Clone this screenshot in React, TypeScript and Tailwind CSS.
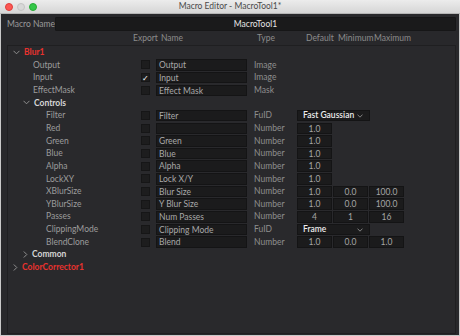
import React from 'react'

type Row = {
  label: string
  depth: number
  kind: 'group' | 'param'
  open?: boolean
  red?: boolean
  checked?: boolean
  name?: string
  type?: string
  def?: string
  min?: string
  max?: string
  combo?: string
}

const rows: Row[] = [
  { label: 'Blur1', depth: 0, kind: 'group', open: true, red: true },
  { label: 'Output', depth: 1, kind: 'param', name: 'Output', type: 'Image' },
  { label: 'Input', depth: 1, kind: 'param', name: 'Input', type: 'Image', checked: true },
  { label: 'EffectMask', depth: 1, kind: 'param', name: 'Effect Mask', type: 'Mask' },
  { label: 'Controls', depth: 1, kind: 'group', open: true },
  { label: 'Filter', depth: 2, kind: 'param', name: 'Filter', type: 'FuID', combo: 'Fast Gaussian' },
  { label: 'Red', depth: 2, kind: 'param', name: '', type: 'Number', def: '1.0' },
  { label: 'Green', depth: 2, kind: 'param', name: 'Green', type: 'Number', def: '1.0' },
  { label: 'Blue', depth: 2, kind: 'param', name: 'Blue', type: 'Number', def: '1.0' },
  { label: 'Alpha', depth: 2, kind: 'param', name: 'Alpha', type: 'Number', def: '1.0' },
  { label: 'LockXY', depth: 2, kind: 'param', name: 'Lock X/Y', type: 'Number', def: '1.0' },
  { label: 'XBlurSize', depth: 2, kind: 'param', name: 'Blur Size', type: 'Number', def: '1.0', min: '0.0', max: '100.0' },
  { label: 'YBlurSize', depth: 2, kind: 'param', name: 'Y Blur Size', type: 'Number', def: '1.0', min: '0.0', max: '100.0' },
  { label: 'Passes', depth: 2, kind: 'param', name: 'Num Passes', type: 'Number', def: '4', min: '1', max: '16' },
  { label: 'ClippingMode', depth: 2, kind: 'param', name: 'Clipping Mode', type: 'FuID', combo: 'Frame' },
  { label: 'BlendClone', depth: 2, kind: 'param', name: 'Blend', type: 'Number', def: '1.0', min: '0.0', max: '1.0' },
  { label: 'Common', depth: 1, kind: 'group', open: false },
  { label: 'ColorCorrector1', depth: 0, kind: 'group', open: false, red: true },
]

const Chevron = ({ open }: { open?: boolean }) =>
  open ? (
    <svg width="7" height="5" viewBox="0 0 7 5" className="shrink-0">
      <polyline points="0.5,0.8 3.5,3.8 6.5,0.8" fill="none" stroke="#9a9a9a" strokeWidth="0.9" />
    </svg>
  ) : (
    <svg width="5" height="7" viewBox="0 0 5 7" className="shrink-0">
      <polyline points="0.8,0.5 3.8,3.5 0.8,6.5" fill="none" stroke="#9a9a9a" strokeWidth="0.9" />
    </svg>
  )

const NumBox = ({ v }: { v?: string }) => (
  <div className="w-[35px] h-[11.5px] bg-[#1b1b1c] border border-[#141415] text-center leading-[10px] text-[#a6a6a6]">
    {v}
  </div>
)

const groupPad = ['pl-[5px]', 'pl-[15px]', 'pl-[27px]']
const paramPad = ['pl-[25px]', 'pl-[25px]', 'pl-[38px]']

const App = () => {
  return (
    <div
      className="w-[460px] h-[336px] bg-[#c9c9c9] flex flex-col overflow-hidden text-[8.5px] whitespace-nowrap"
      style={{ fontFamily: 'Lato, "Open Sans", sans-serif' }}
    >
      {/* title bar */}
      <div className="h-[14px] bg-gradient-to-b from-[#ececec] to-[#d6d6d6] flex items-center relative border-b border-[#b5b5b5]">
        <div className="flex gap-[4px] pl-[5px]">
          <span className="w-[8px] h-[8px] rounded-full bg-[#fc5753] border border-[#df3e3b]" />
          <span className="w-[8px] h-[8px] rounded-full bg-[#d8d8d8] border border-[#c4c4c4]" />
          <span className="w-[8px] h-[8px] rounded-full bg-[#33c748] border border-[#27aa35]" />
        </div>
        <div className="absolute inset-0 flex items-center justify-center text-[#4a4a4a] text-[8.5px]">
          Macro Editor - MacroTool1*
        </div>
      </div>

      <div className="flex-1 mx-[1px] mb-[1px] bg-[#28282b] flex flex-col">
        {/* macro name */}
        <div className="flex items-center h-[14px] mt-[3px] pl-[6px] pr-[3px]">
          <div className="w-[48px] text-[#9a9a9a]">Macro Name</div>
          <div className="flex-1 h-[14px] bg-[#1a1a1b] border border-[#161617] rounded-[1px] flex items-center justify-center text-[#e6e6e6]">
            MacroTool1
          </div>
        </div>

        {/* header */}
        <div className="flex items-center h-[14px] text-[#8c8c8c]">
          <div className="w-[132px]" />
          <div className="w-[28px]">Export</div>
          <div className="w-[96px]">Name</div>
          <div className="w-[49px]">Type</div>
          <div className="w-[32px]">Default</div>
          <div className="w-[36px]">Minimum</div>
          <div>Maximum</div>
        </div>

        {/* panel */}
        <div className="flex-1 ml-[6px] mr-[3px] mb-[1px] border border-[#1f1f21] bg-[#29292c] flex flex-col">
          {rows.map((r, i) => (
            <div key={i} className="flex items-center h-[12.67px]">
              {r.kind === 'group' ? (
                <div className={`flex items-center gap-[4px] ${groupPad[r.depth]}`}>
                  <Chevron open={r.open} />
                  <span className={r.red ? 'text-[#e8322e] font-bold' : 'text-[#d6d6d6] font-bold'}>
                    {r.label}
                  </span>
                </div>
              ) : (
                <>
                  <div className={`w-[133px] text-[#9c9c9c] ${paramPad[r.depth]}`}>{r.label}</div>
                  <div className="w-[9px] h-[9px] bg-[#1d1d1e] border border-[#161617] flex items-center justify-center text-white text-[8px] leading-none">
                    {r.checked ? '✓' : ''}
                  </div>
                  <div className="ml-[6px] w-[91px] h-[11.5px] bg-[#1b1b1c] border border-[#141415] pl-[2px] leading-[10px] text-[#a8a8a8]">
                    {r.name}
                  </div>
                  <div className="ml-[7px] w-[43px] text-[#8e8e8e]">{r.type}</div>
                  {r.combo ? (
                    <div className="w-[73px] h-[11.5px] bg-[#1b1b1c] border border-[#141415] flex items-center justify-between pl-[5px] pr-[6px] text-[#ececec] font-semibold">
                      <span>{r.combo}</span>
                      <svg width="6" height="4" viewBox="0 0 6 4">
                        <polyline points="0.5,0.6 3,3.2 5.5,0.6" fill="none" stroke="#9a9a9a" strokeWidth="0.8" />
                      </svg>
                    </div>
                  ) : r.def ? (
                    <div className="flex gap-[1px]">
                      <NumBox v={r.def} />
                      {r.min && <NumBox v={r.min} />}
                      {r.max && <NumBox v={r.max} />}
                    </div>
                  ) : null}
                </>
              )}
            </div>
          ))}
        </div>
      </div>
    </div>
  )
}

export default App
